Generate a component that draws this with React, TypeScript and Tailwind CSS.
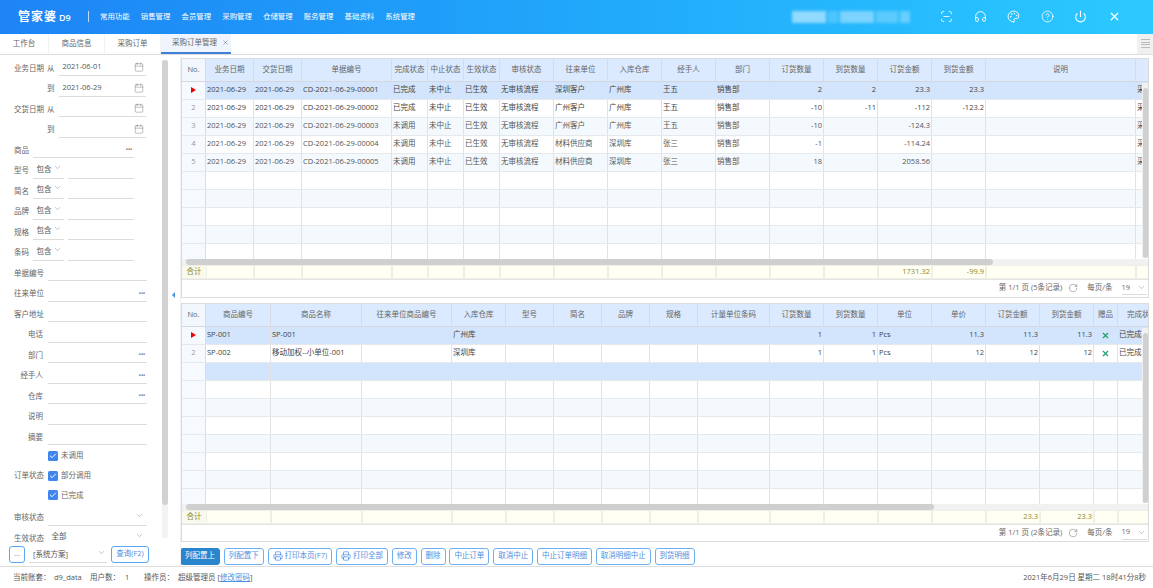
import React from 'react';
import { Calendar, Check, ChevronDown, CircleHelp, Headphones, Palette, Power, Printer, RotateCw, ScanLine, X } from 'lucide-react';

const topCols = 'grid-cols-[24px_48px_48px_90px_36px_36px_36px_54px_54px_54px_54px_54px_54px_54px_54px_54px_150px_14px]';
const bottomCols = 'grid-cols-[24px_65px_91px_90px_54px_48px_48px_48px_48px_72px_54px_54px_54px_54px_54px_54px_24px_33px]';

const nav = ['常用功能', '销售管理', '会员管理', '采购管理', '仓储管理', '账务管理', '基础资料', '系统管理'];

const topHead = ['业务日期', '交货日期', '单据编号', '完成状态', '中止状态', '生效状态', '审核状态', '往来单位', '入库仓库', '经手人', '部门', '订货数量', '到货数量', '订货金额', '到货金额', '说明', ''];
const topAlign = 'lllllllllllrrrrll';
const topRows = [
  ['2021-06-29', '2021-06-29', 'CD-2021-06-29-00001', '已完成', '未中止', '已生效', '无审核流程', '深圳客户', '广州库', '王五', '销售部', '2', '2', '23.3', '23.3', '', '采'],
  ['2021-06-29', '2021-06-29', 'CD-2021-06-29-00002', '已完成', '未中止', '已生效', '无审核流程', '广州客户', '广州库', '王五', '销售部', '-10', '-11', '-112', '-123.2', '', '采'],
  ['2021-06-29', '2021-06-29', 'CD-2021-06-29-00003', '未调用', '未中止', '已生效', '无审核流程', '广州客户', '广州库', '王五', '销售部', '-10', '', '-124.3', '', '', '采'],
  ['2021-06-29', '2021-06-29', 'CD-2021-06-29-00004', '未调用', '未中止', '已生效', '无审核流程', '材料供应商', '深圳库', '张三', '销售部', '-1', '', '-114.24', '', '', '采'],
  ['2021-06-29', '2021-06-29', 'CD-2021-06-29-00005', '未调用', '未中止', '已生效', '无审核流程', '材料供应商', '深圳库', '张三', '销售部', '18', '', '2058.56', '', '', '采'],
];
const topSum = ['', '', '', '', '', '', '', '', '', '', '', '', '', '1731.32', '-99.9', '', ''];

const bottomHead = ['商品编号', '商品名称', '往来单位商品编号', '入库仓库', '型号', '简名', '品牌', '规格', '计量单位条码', '订货数量', '到货数量', '单位', '单价', '订货金额', '到货金额', '赠品', '完成状'];
const bottomAlign = 'lllllllllrrlrrrcl';
const bottomRows = [
  ['SP-001', 'SP-001', '', '广州库', '', '', '', '', '', '1', '1', 'Pcs', '11.3', '11.3', '11.3', 'x', '已完成'],
  ['SP-002', '移动加权--小单位-001', '', '深圳库', '', '', '', '', '', '1', '1', 'Pcs', '12', '12', '12', 'x', '已完成'],
];
const bottomSum = ['', '', '', '', '', '', '', '', '', '', '', '', '', '23.3', '23.3', '', ''];

const buttons = [
  { label: '列配置上', primary: true },
  { label: '列配置下' },
  { label: '打印本页(F7)', icon: true },
  { label: '打印全部', icon: true },
  { label: '修改' },
  { label: '删除' },
  { label: '中止订单' },
  { label: '取消中止' },
  { label: '中止订单明细' },
  { label: '取消明细中止' },
  { label: '到货明细' },
];

function Dots() {
  return <span className="absolute right-[2px] bottom-[4px] text-[7px] leading-none tracking-[-0.5px] text-[#888]">•••</span>;
}

function DateRow({ label, side, value }: { label?: string; side: string; value?: string }) {
  return (
    <div className="flex h-[20.5px] items-end pl-[14px]">
      <span className="w-[33px] mb-[1.5px] leading-[14px] text-[#666]">{label}</span>
      <span className="w-[12px] mb-[1.5px] leading-[14px] text-[#666]">{side}</span>
      <div className="relative w-[87px] h-[17px] border-b border-[#dcdcdc] pl-[3.5px] leading-[15px] text-[#555]">
        {value}
        <Calendar size={10} strokeWidth={1} className="absolute right-[2px] bottom-[3px] text-[#666]" />
      </div>
    </div>
  );
}

function GoodsRow({ label, select, dots }: { label: string; select?: boolean; dots?: boolean }) {
  return (
    <div className="flex h-[20.5px] items-end pl-[14px]">
      <span className="w-[19px] mb-[1.5px] leading-[14px] text-[#666]">{label}</span>
      {select && (
        <div className="relative w-[31px] h-[17px] mr-[4px] border-b border-[#dcdcdc] pl-[3.5px] leading-[15px] text-[#555]">
          包含
          <ChevronDown size={9} strokeWidth={1} className="absolute right-[2px] top-[1px] text-[#666]" />
        </div>
      )}
      <div className="relative flex-1 mr-[27px] h-[17px] border-b border-[#dcdcdc]">{dots && <Dots />}</div>
    </div>
  );
}

function FieldRow({ label, dots, select, value }: { label: string; dots?: boolean; select?: boolean; value?: string }) {
  return (
    <div className="flex h-[20.5px] items-end pl-[14px]">
      <span className="w-[29px] mb-[1.5px] leading-[14px] text-right text-[#666] whitespace-nowrap">{label}</span>
      <div className={`relative w-[99px] ml-[5px] h-[17px] pl-[3.5px] leading-[15px] text-[#555] ${value ? '' : 'border-b border-[#dcdcdc]'}`}>
        {value}
        {dots && <Dots />}
        {select && <ChevronDown size={9} strokeWidth={1} className="absolute right-[3px] top-[2px] text-[#666]" />}
      </div>
    </div>
  );
}

function CheckRow({ label, title }: { label: string; title?: string }) {
  return (
    <div className="flex h-[19.7px] items-center pl-[14px]">
      <span className="w-[29px] text-right text-[#666] whitespace-nowrap">{title}</span>
      <span className="ml-[5px] flex w-[10px] h-[10px] items-center justify-center rounded-[1.5px] bg-[#3f86ee]">
        <Check size={8} strokeWidth={3} className="text-white" />
      </span>
      <span className="ml-[3px] text-[#666]">{label}</span>
    </div>
  );
}

function Grid({ cols, head, align, rows, sum, thumb, vThumb, records, blueRow }: {
  cols: string;
  head: string[];
  align: string;
  rows: string[][];
  sum: string[];
  thumb: string;
  vThumb: string;
  records: string;
  blueRow?: number;
}) {
  const rowList = Array.from({ length: 10 }, (_, i) => rows[i] ?? head.map(() => ''));
  return (
    <div className="relative flex h-full flex-col border border-[#dcdcdc] bg-white">
      <div className={`grid ${cols} h-[23px] shrink-0 overflow-hidden border-b border-[#d4d8de] bg-[#dbeafe] text-[#666]`}>
        <div className="flex items-center justify-center border-r border-[#d8dce2] bg-[#f2f7fd]">No.</div>
        {head.map((h, i) => (
          <div
            key={i}
            className={`flex items-center overflow-hidden whitespace-nowrap border-r border-[#d8dce2] ${i === head.length - 1 ? 'justify-start pl-[9px]' : 'justify-center'}`}
          >
            {h}
          </div>
        ))}
      </div>
      <div className="h-[177px] shrink-0 overflow-hidden">
        {rowList.map((row, r) => {
          const selected = r === 0 || r === blueRow;
          const rowBg = selected ? 'bg-[#d2e5fc]' : r % 2 === 0 ? 'bg-[#f4f9fe]' : 'bg-white';
          return (
            <div key={r} className={`grid ${cols} h-[18px] border-b border-[#e6e9ec] ${rowBg} ${r < 2 ? 'text-[#444]' : 'text-[#555]'}`}>
              <div className="flex items-center justify-center border-r border-[#dcdcdc] bg-[#f6f9fd] text-[#999]">
                {r === 0 ? <span className="h-0 w-0 border-y-[3px] border-l-[5px] border-y-transparent border-l-[#f00000]" /> : r < rows.length ? r + 1 : ''}
              </div>
              {row.map((c, i) => (
                <div
                  key={i}
                  className={`flex items-center overflow-hidden whitespace-nowrap border-r border-[#e2e2e2] px-[1px] ${align[i] === 'r' ? 'justify-end' : align[i] === 'c' ? 'justify-center' : 'justify-start'}`}
                >
                  {c === 'x' ? <X size={9} strokeWidth={3} className="text-[#1f9d6b]" /> : c}
                </div>
              ))}
            </div>
          );
        })}
      </div>
      <div className="relative h-[6px] shrink-0 bg-[#f1f1f1]">
        <div className={`absolute left-[4px] top-0 h-full rounded-full bg-[#cfcfcf] ${thumb}`} />
      </div>
      <div className={`grid ${cols} h-[15px] shrink-0 overflow-hidden border-b border-[#e4e4e4] bg-[#efefe6] py-[1px] text-[#8a8a2e]`}>
        <div className="flex items-center justify-center bg-[#f9f9ee]">合计</div>
        {sum.map((c, i) => (
          <div key={i} className="ml-[1px] mr-[1px] flex items-center justify-end overflow-hidden bg-[#fffff4] pr-[1px]">{c}</div>
        ))}
      </div>
      <div className="flex flex-1 items-center justify-end pr-[1.5px] text-[#666]">
        <span>第 1/1 页 ({records}条记录)</span>
        <RotateCw size={10} strokeWidth={1} className="ml-[6px] text-[#555]" />
        <span className="ml-[9px]">每页/条</span>
        <div className="ml-[9px] flex h-[14px] w-[25px] items-center border-b border-[#dcdcdc]">
          <span>19</span>
          <ChevronDown size={9} strokeWidth={1} className="ml-auto mr-[1px]" />
        </div>
      </div>
      <div className={`absolute right-0 top-[24px] w-[6px] bg-[#f1f1f1] ${vThumb}`}>
        <div className="mx-auto mt-[5px] h-[calc(100%-5px)] w-[5px] rounded-full bg-[#d0d0d0]" />
      </div>
    </div>
  );
}

export default function App() {
  return (
    <div className="flex h-[588px] w-[1153px] flex-col overflow-hidden bg-white font-['Open_Sans','Noto_Sans_CJK_SC',sans-serif] text-[7.5px]">
      <header className="flex h-[33.5px] shrink-0 items-center bg-gradient-to-r from-[#1e84f5] to-[#2cc9ff] text-white">
        <div className="ml-[18px] flex w-[70px] items-baseline">
          <span className="text-[12px] font-semibold tracking-[1px]">管家婆</span>
          <span className="ml-[2px] text-[9px] font-semibold">D9</span>
        </div>
        <div className="h-[11px] w-px bg-white/70" />
        <nav className="ml-[11px] flex gap-[11.2px] text-[7.4px]">
          {nav.map((n) => <span key={n} className="whitespace-nowrap">{n}</span>)}
        </nav>
        <div className="ml-[377px] flex h-[12px] w-[118px] gap-[2px] blur-[1.5px]">
          <div className="w-[36px] bg-white/50" />
          <div className="w-[10px] bg-white/20" />
          <div className="w-[36px] bg-white/40" />
          <div className="w-[24px] bg-white/25" />
          <div className="w-[10px] bg-white/30" />
        </div>
        <div className="ml-[30px] flex items-center gap-[20.6px]">
          <ScanLine size={13} strokeWidth={1.5} />
          <Headphones size={13} strokeWidth={1.7} />
          <Palette size={13} strokeWidth={1.7} />
          <CircleHelp size={13} strokeWidth={1.5} />
          <Power size={13} strokeWidth={2} />
          <X size={13} strokeWidth={2.4} />
        </div>
      </header>

      <div className="flex h-[21px] shrink-0 border-b border-[#dddddd] text-[#666]">
        <div className="flex w-[49px] items-center justify-center border-r border-[#f2f2f2]">工作台</div>
        <div className="flex w-[56px] items-center justify-center border-r border-[#f2f2f2]">商品信息</div>
        <div className="flex w-[56px] items-center justify-center border-r border-[#f2f2f2]">采购订单</div>
        <div className="flex w-[70px] items-center justify-end gap-[5px] border-b-2 border-[#3f7fd8] bg-[#eef5fe] pr-[2px]">
          采购订单管理
          <X size={7} strokeWidth={1.5} className="text-[#555]" />
        </div>
        <div className="ml-auto flex w-[16px] flex-col items-center justify-center gap-[1.5px] bg-[#f0f0f0]">
          <span className="h-px w-[9px] bg-[#bbbbbb]" />
          <span className="h-px w-[9px] bg-[#bbbbbb]" />
          <span className="h-px w-[9px] bg-[#bbbbbb]" />
          <span className="h-px w-[9px] bg-[#bbbbbb]" />
        </div>
      </div>

      <main className="flex h-[512px] shrink-0 border-b border-[#dddddd]">
        <aside className="flex w-[172px] shrink-0 flex-col">
          <div className="flex h-[491px] shrink-0">
            <div className="w-[161px] shrink-0 pt-[1px]">
              <DateRow label="业务日期" side="从" value="2021-06-01" />
              <DateRow side="到" value="2021-06-29" />
              <DateRow label="交货日期" side="从" />
              <DateRow side="到" />
              <GoodsRow label="商品" dots />
              <GoodsRow label="型号" select />
              <GoodsRow label="简名" select />
              <GoodsRow label="品牌" select />
              <GoodsRow label="规格" select />
              <GoodsRow label="条码" select />
              <FieldRow label="单据编号" />
              <FieldRow label="往来单位" dots />
              <FieldRow label="客户地址" />
              <FieldRow label="电话" />
              <FieldRow label="部门" dots />
              <FieldRow label="经手人" dots />
              <FieldRow label="仓库" dots />
              <FieldRow label="说明" />
              <FieldRow label="摘要" />
              <div className="pt-[1px]">
                <CheckRow label="未调用" />
                <CheckRow label="部分调用" title="订单状态" />
                <CheckRow label="已完成" />
              </div>
              <FieldRow label="审核状态" select />
              <FieldRow label="生效状态" select value="全部" />
            </div>
            <div className="ml-[1px] mt-[5px] h-[478px] w-[6px] bg-[#f3f3f3]">
              <div className="h-[445px] rounded-full bg-[#d2d2d2]" />
            </div>
          </div>
          <div className="flex h-[17px] items-center pl-[9px]">
            <button className="h-[17px] w-[16px] rounded-[3px] border border-[#5aa7f4] text-[#4a90e2]">...</button>
            <div className="relative ml-[4px] h-[17px] w-[78px] border-b border-[#dcdcdc] pl-[4px] leading-[16px] text-[#555]">
              [系统方案]
              <ChevronDown size={9} strokeWidth={1} className="absolute right-[1px] top-[2px] text-[#666]" />
            </div>
            <button className="ml-[4px] h-[17px] w-[38px] rounded-[3px] border border-[#5aa7f4] text-[#4a90e2]">查询(F2)</button>
          </div>
        </aside>

        <div className="relative w-[9px] shrink-0 border-r border-[#eef2f8]">
          <span className="absolute left-[0px] top-[237px] h-0 w-0 border-y-[3px] border-r-[3px] border-y-transparent border-r-[#4a90e2]" />
        </div>

        <section className="flex w-[968px] shrink-0 flex-col pt-[3px]">
          <div className="h-[240px] shrink-0">
            <Grid cols={topCols} head={topHead} align={topAlign} rows={topRows} sum={topSum} thumb="w-[807px]" vThumb="h-[175px]" records="5" />
          </div>
          <div className="mt-[5px] h-[239px] shrink-0">
            <Grid cols={bottomCols} head={bottomHead} align={bottomAlign} rows={bottomRows} sum={bottomSum} thumb="w-[748px]" vThumb="h-[175px]" records="2" blueRow={2} />
          </div>
          <div className="mt-[6px] flex h-[17px] shrink-0 gap-[3.8px] -ml-[1px]">
            {buttons.map((b) => (
              <button
                key={b.label}
                className={`flex items-center whitespace-nowrap rounded-[3px] border px-[4px] ${b.primary ? 'border-[#2a85cd] bg-[#2a85cd] text-white' : 'border-[#6db0f5] bg-white text-[#4a90e2]'}`}
              >
                {b.icon && <Printer size={10} strokeWidth={1.7} className="mr-[2px] text-[#3f86ee]" />}
                {b.label}
              </button>
            ))}
          </div>
        </section>
      </main>

      <footer className="flex flex-1 items-center pl-[13px] pr-[7px] text-[#555]">
        <span className="w-[41px]">当前账套：</span>
        <span className="w-[36px]">d9_data</span>
        <span className="w-[35px]">用户数：</span>
        <span className="w-[19px]">1</span>
        <span className="w-[34px]">操作员：</span>
        <span>超级管理员</span>
        <span className="ml-[2px]">[<span className="text-[#4a90e2] underline">修改密码</span>]</span>
        <span className="ml-auto">2021年6月29日 星期二 18时41分8秒</span>
      </footer>
    </div>
  );
}
